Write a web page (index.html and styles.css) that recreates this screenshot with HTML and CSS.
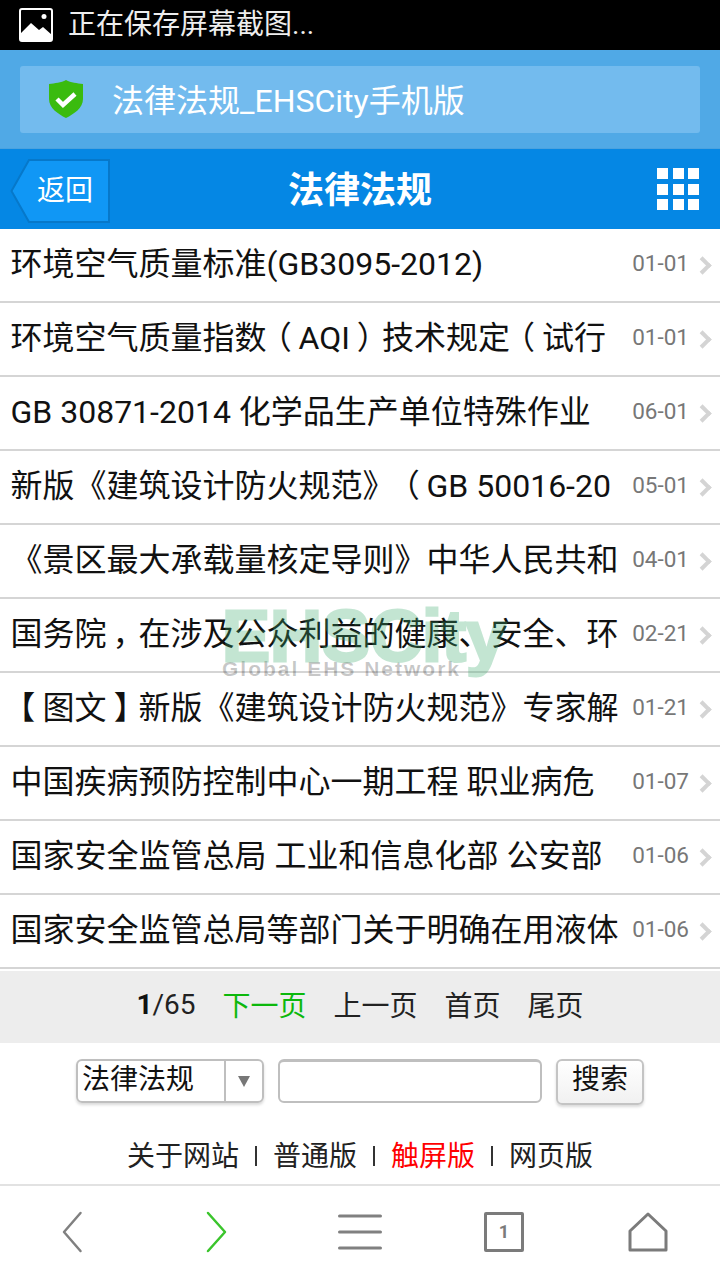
FILE: index.html
```html
<!DOCTYPE html>
<html lang="zh-CN">

<head>
    <meta charset="UTF-8">
    <meta name="viewport" content="width=device-width, initial-scale=1.0">
    <title>法律法规_EHSCity手机版</title>
    <link rel="stylesheet" href="styles.css">
</head>

<body>
    <div class="status-bar">
        <svg class="status-icon" width="34" height="34" viewBox="0 0 34 34">
            <rect x="1" y="1" width="32" height="32" rx="2" fill="#000" stroke="#fff" stroke-width="2" />
            <circle cx="25" cy="8.500" r="2.500" fill="#fff" />
            <path d="M1 26 L12 15 L20 22 L24 19 L33 27 V33 H1 Z" fill="#fff" />
        </svg>
        <span>正在保存屏幕截图...</span>
    </div>

    <div class="address-bar">
        <div class="address-box">
            <svg class="shield" width="34" height="38" viewBox="0 0 34 38">
                <path d="M17 0 C22 3 28 3 34 4 V19 C34 28 25 34 17 38 C9 34 0 28 0 19 V4 C6 3 12 3 17 0 Z" fill="#3abb0f" />
                <path d="M8 19 L14 25 L26 14" fill="none" stroke="#fff" stroke-width="4.500" />
            </svg>
            <span class="address-text">法律法规_EHSCity手机版</span>
        </div>
    </div>

    <header class="title-bar">
        <a href="#" class="back-btn">
            <svg class="back-shape" width="100" height="64" viewBox="0 0 100 64">
                <path d="M19 1 H99 V63 H19 L1.500 32 Z" fill="#1097f5" stroke="#0678ca" stroke-width="2" />
            </svg>
            <span class="back-label">返回</span>
        </a>
        <h1>法律法规</h1>
        <div class="grid-icon">
            <i></i><i></i><i></i><i></i><i></i><i></i><i></i><i></i><i></i>
        </div>
    </header>

    <main class="content">
        <ul class="news-list">
            <li><span class="news-title">环境空气质量标准(GB3095-2012)</span><span class="news-date">01-01</span><span class="arrow"></span></li>
            <li><span class="news-title">环境空气质量指数<span class="punct">（</span>AQI<span class="punct">）</span>技术规定<span class="punct">（</span>试行</span><span class="news-date">01-01</span><span class="arrow"></span></li>
            <li><span class="news-title">GB 30871-2014 化学品生产单位特殊作业</span><span class="news-date">06-01</span><span class="arrow"></span></li>
            <li><span class="news-title">新版《建筑设计防火规范》<span class="punct">（</span>GB 50016-20</span><span class="news-date">05-01</span><span class="arrow"></span></li>
            <li><span class="news-title">《景区最大承载量核定导则》中华人民共和</span><span class="news-date">04-01</span><span class="arrow"></span></li>
            <li><span class="news-title">国务院<span class="punct">，</span>在涉及公众利益的健康、安全、环</span><span class="news-date">02-21</span><span class="arrow"></span></li>
            <li><span class="news-title"><span class="punct">【</span>图文<span class="punct">】</span>新版《建筑设计防火规范》专家解</span><span class="news-date">01-21</span><span class="arrow"></span></li>
            <li><span class="news-title">中国疾病预防控制中心一期工程 职业病危</span><span class="news-date">01-07</span><span class="arrow"></span></li>
            <li><span class="news-title">国家安全监管总局 工业和信息化部 公安部</span><span class="news-date">01-06</span><span class="arrow"></span></li>
            <li><span class="news-title">国家安全监管总局等部门关于明确在用液体</span><span class="news-date">01-06</span><span class="arrow"></span></li>
        </ul>

        <div class="watermark">
            <div class="wm-logo">EHSCity</div>
            <div class="wm-sub">Global EHS Network</div>
        </div>

        <div class="pager">
            <span><b>1</b>/65</span>
            <a href="#" class="next">下一页</a>
            <a href="#">上一页</a>
            <a href="#">首页</a>
            <a href="#">尾页</a>
        </div>

        <form class="search">
            <div class="select-box">
                <span class="select-text">法律法规</span>
                <span class="select-arrow"></span>
            </div>
            <div class="search-input"></div>
            <div class="search-btn">搜索</div>
        </form>

        <div class="foot-links">
            <a href="#">关于网站</a><span class="sep"></span>
            <a href="#">普通版</a><span class="sep"></span>
            <a href="#" class="current">触屏版</a><span class="sep"></span>
            <a href="#">网页版</a>
        </div>
    </main>

    <nav class="toolbar">
        <svg width="48" height="48" viewBox="0 0 48 48">
            <path d="M32.500 5 L16 24 L32.500 43" fill="none" stroke="#808080" stroke-width="2.500" stroke-linecap="round" stroke-linejoin="round" />
        </svg>
        <svg width="48" height="48" viewBox="0 0 48 48">
            <path d="M16 5 L33 24 L16 43" fill="none" stroke="#3ac52c" stroke-width="2.500" stroke-linecap="round" stroke-linejoin="round" />
        </svg>
        <svg width="48" height="48" viewBox="0 0 48 48">
            <path d="M3.500 8 H44.500 M3.500 24 H44.500 M3.500 40 H44.500" fill="none" stroke="#808080" stroke-width="3" stroke-linecap="round" />
        </svg>
        <div class="tab-count">1</div>
        <svg width="48" height="48" viewBox="0 0 48 48">
            <path d="M24 6 L42 23 V42 H6 V23 Z" fill="none" stroke="#7b7b7b" stroke-width="3" stroke-linejoin="round" />
        </svg>
    </nav>
</body>

</html>
```

FILE: styles.css
```css
* {
    box-sizing: border-box;
}

body {
    margin: 0;
    width: 720px;
    height: 1280px;
    overflow: hidden;
    background: #fff;
    color: #111;
    font-family: Roboto, "Noto Sans CJK SC", sans-serif;
    text-spacing-trim: space-all;
    position: relative;
}

a {
    color: inherit;
    text-decoration: none;
}

.status-bar {
    height: 50px;
    background: #000;
    color: #eee;
    display: flex;
    align-items: center;
    padding-left: 19px;
    font-size: 28px;
    gap: 15px;
}

.status-bar span {
    padding-bottom: 6px;
}

.address-bar {
    height: 99px;
    padding: 16px 20px;
    background: #50a9e6;
    border-bottom: 1px solid #4aa2df;
}

.address-box {
    height: 67px;
    background: #73bbee;
    border-radius: 3px;
    display: flex;
    align-items: center;
    padding-left: 29px;
    gap: 29px;
    color: #fff;
    font-size: 32px;
}

.shield {
    margin-bottom: 2px;
}

.address-text {
    padding-bottom: 3px;
}

.title-bar {
    height: 80px;
    background: #0587e4;
    display: flex;
    align-items: center;
    justify-content: space-between;
    padding: 0 21px 0 10px;
    position: relative;
}

.back-btn {
    width: 100px;
    height: 64px;
    margin-top: 4px;
    position: relative;
    display: flex;
    align-items: center;
    justify-content: center;
    padding: 0 0 6px 10px;
    color: #fff;
    font-size: 28px;
}

.back-shape {
    position: absolute;
    left: 0;
    top: 0;
}

.back-label {
    position: relative;
}

.title-bar h1 {
    position: absolute;
    left: 0;
    right: 0;
    margin: 0;
    padding-bottom: 4px;
    text-align: center;
    font-size: 36px;
    font-weight: 700;
    color: #fff;
}

.grid-icon {
    display: grid;
    grid-template-columns: repeat(3, 11px);
    grid-auto-rows: 11px;
    gap: 4.500px;
    width: 42px;
    filter: blur(0.6px);
}

.grid-icon i {
    background: #fff;
}

.news-list {
    margin: 0;
    padding: 0;
    list-style: none;
}

.news-list li {
    height: 74px;
    display: flex;
    align-items: center;
    padding: 0 0 0 10.500px;
    border-bottom: 2px solid #d5d5d5;
}

.news-title {
    flex: 1;
    padding-bottom: 8px;
    font-size: 32px;
    white-space: nowrap;
    overflow: hidden;
    color: #111;
}

/* full-width marks sit in the middle of their box on the source device */
.punct {
    display: inline-block;
    width: 32px;
    text-align: center;
    font-feature-settings: "palt";
}

.news-date {
    padding-bottom: 4px;
    font-size: 22.500px;
    color: #777;
    margin-right: 7px;
}

.arrow {
    width: 13px;
    height: 13px;
    border-top: 4px solid #d4d4d4;
    border-right: 4px solid #d4d4d4;
    transform: rotate(45deg);
    margin-right: 11px;
}

.content {
    position: relative;
}

.watermark {
    position: absolute;
    left: 222px;
    top: 372px;
    width: 290px;
    pointer-events: none;
}

.wm-logo {
    font-family: "Liberation Sans", sans-serif;
    font-weight: 700;
    font-size: 72px;
    line-height: 70px;
    color: #3cab6e;
    -webkit-text-stroke: 3px #3cab6e;
    opacity: 0.3;
}

.wm-sub {
    font-family: "Liberation Sans", sans-serif;
    font-weight: 700;
    font-size: 21px;
    letter-spacing: 2px;
    color: rgba(0, 0, 0, 0.22);
    white-space: nowrap;
    margin-top: -14px;
}

.pager {
    margin-top: 2px;
    height: 72px;
    padding-bottom: 6px;
    background: #ededed;
    display: flex;
    align-items: center;
    justify-content: center;
    gap: 27px;
    font-size: 28px;
    color: #222;
}

.pager b {
    color: #111;
}

.pager .next {
    color: #0cb80c;
}

.search {
    display: flex;
    align-items: flex-start;
    margin: 16px 0 0 76px;
    height: 60px;
}

.select-box {
    width: 188px;
    height: 44px;
    border: 2px solid #bfbfbf;
    border-radius: 6px;
    box-shadow: 0 2px 3px rgba(0, 0, 0, 0.15);
    display: flex;
    font-size: 28px;
    line-height: 38px;
}

.select-text {
    width: 148px;
    padding-left: 4px;
    border-right: 2px solid #bfbfbf;
}

.select-arrow {
    width: 0;
    height: 0;
    margin: 15px 0 0 12px;
    border-left: 6px solid transparent;
    border-right: 6px solid transparent;
    border-top: 11px solid #777;
}

.search-input {
    width: 264px;
    height: 44px;
    margin-left: 14px;
    border: 2px solid #bfbfbf;
    border-top-width: 3px;
    border-radius: 6px;
}

.search-btn {
    width: 88px;
    height: 46px;
    margin-left: 14px;
    border: 2px solid #c4c4c4;
    border-radius: 6px;
    background: linear-gradient(#fff, #f1f1f1);
    box-shadow: 0 2px 3px rgba(0, 0, 0, 0.15);
    text-align: center;
    font-size: 28px;
    line-height: 38px;
}

.foot-links {
    display: flex;
    justify-content: center;
    align-items: center;
    height: 60px;
    font-size: 28px;
    color: #222;
    gap: 16px;
    margin-top: 5px;
}

.foot-links .current {
    color: #f00;
}

.sep {
    width: 2px;
    height: 20px;
    margin-top: 4px;
    background: #333;
}

.toolbar {
    position: absolute;
    left: 0;
    right: 0;
    bottom: 0;
    height: 96px;
    padding-bottom: 2px;
    border-top: 2px solid #e2e2e2;
    background: #fff;
    display: grid;
    grid-template-columns: repeat(5, 1fr);
    justify-items: center;
    align-items: center;
}

.tab-count {
    width: 40px;
    height: 40px;
    border: 3px solid #7b7b7b;
    border-radius: 2px;
    color: #7b7b7b;
    font-size: 18px;
    font-weight: 700;
    text-align: center;
    line-height: 34px;
}
```
